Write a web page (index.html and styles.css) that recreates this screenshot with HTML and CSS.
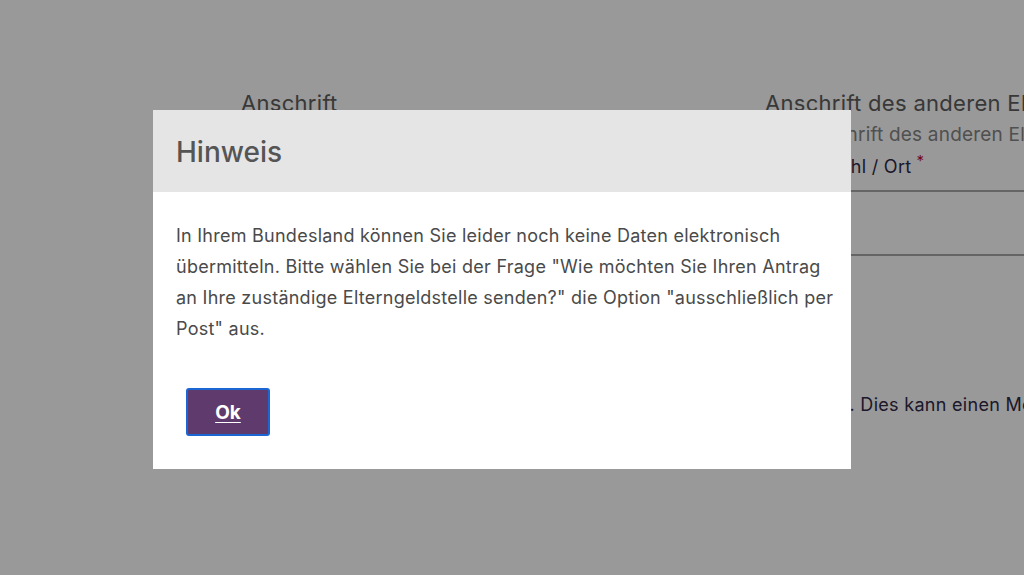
FILE: index.html
```html
<!DOCTYPE html>
<html lang="de">

<head>
    <meta charset="UTF-8">
    <meta name="viewport" content="width=device-width, initial-scale=1.0">
    <title>Elterngeld Antrag</title>
    <link rel="stylesheet" href="styles.css">
</head>

<body>
    <!-- Form page behind the dialog -->
    <div class="page">
        <section class="column column-left">
            <h2>Anschrift</h2>
            <p class="hint">Ihre Anschrift</p>
            <label class="field-label">Postleitzahl / Ort<span class="required">*</span></label>
            <div class="field"></div>
        </section>

        <section class="column column-right">
            <h2>Anschrift des anderen Elternteils</h2>
            <p class="hint">Die Anschrift des anderen Elternteils</p>
            <label class="field-label">Postleitzahl / Ort<span class="required">*</span></label>
            <div class="field"></div>
            <p class="notice">Speichert. Dies kann einen Moment dauern.</p>
        </section>
    </div>

    <!-- Dialog -->
    <div class="overlay">
        <div class="dialog" role="dialog" aria-labelledby="dialog-title">
            <div class="dialog-header">
                <h3 id="dialog-title">Hinweis</h3>
            </div>
            <div class="dialog-body">
                <p>In Ihrem Bundesland können Sie leider noch keine Daten elektronisch<br>
                    übermitteln. Bitte wählen Sie bei der Frage "Wie möchten Sie Ihren Antrag<br>
                    an Ihre zuständige Elterngeldstelle senden?" die Option "ausschließlich per<br>
                    Post" aus.</p>
                <button class="btn-ok" type="button">Ok</button>
            </div>
        </div>
    </div>
</body>

</html>
```

FILE: styles.css
```css
body {
    margin: 0;
    background-color: #fff;
    font-family: 'Inter', 'Noto Sans', sans-serif;
    overflow: hidden;
}

/* Form page */
.page {
    display: flex;
    gap: 64px;
    padding: 88px 0 0 241px;
    white-space: nowrap;
}

.column {
    width: 460px;
    flex-shrink: 0;
}

.column h2 {
    margin: 0;
    font-size: 22px;
    font-weight: 400;
    line-height: 30px;
    letter-spacing: 0.3px;
    color: #5e5e5e;
}

.hint {
    margin: 4px 0 0;
    font-size: 19px;
    line-height: 26px;
    letter-spacing: 0.2px;
    color: #858585;
}

.field-label {
    display: block;
    margin-top: 5px;
    font-size: 18px;
    line-height: 28px;
    letter-spacing: 0.3px;
    color: #302a48;
}

.required {
    margin-left: 5px;
    color: #c0102a;
    font-size: 15px;
    vertical-align: super;
    line-height: 0;
}

.field {
    height: 62px;
    margin-top: 9px;
    border-top: 2px solid #a8a8a8;
    border-bottom: 2px solid #a8a8a8;
}

.notice {
    margin: 136px 0 0;
    font-size: 18px;
    line-height: 26px;
    letter-spacing: 0.3px;
    color: #302a48;
}

/* Dialog */
.overlay {
    position: fixed;
    inset: 0;
    background-color: rgba(0, 0, 0, 0.4);
    display: flex;
    align-items: flex-start;
    padding: 110px 0 0 153px;
}

.dialog {
    width: 698px;
    background-color: #fff;
}

.dialog-header {
    height: 82px;
    display: flex;
    align-items: center;
    padding: 2px 23px 0;
    box-sizing: border-box;
    background-color: #e5e5e5;
}

.dialog-header h3 {
    margin: 0;
    font-size: 28px;
    font-weight: 500;
    color: #555;
}

.dialog-body {
    padding: 28px 10px 33px 23px;
}

.dialog-body p {
    margin: 0;
    font-size: 18px;
    line-height: 31px;
    letter-spacing: 0.25px;
    color: #4a4a4a;
}

.btn-ok {
    display: block;
    width: 84px;
    height: 48px;
    margin: 44px 0 0 10px;
    background-color: #5f3b6d;
    border: 2px solid #1a66d2;
    border-radius: 3px;
    color: #fff;
    font-family: inherit;
    font-size: 19px;
    font-weight: 700;
    text-decoration: underline;
    text-underline-offset: 3px;
    cursor: pointer;
}
```
